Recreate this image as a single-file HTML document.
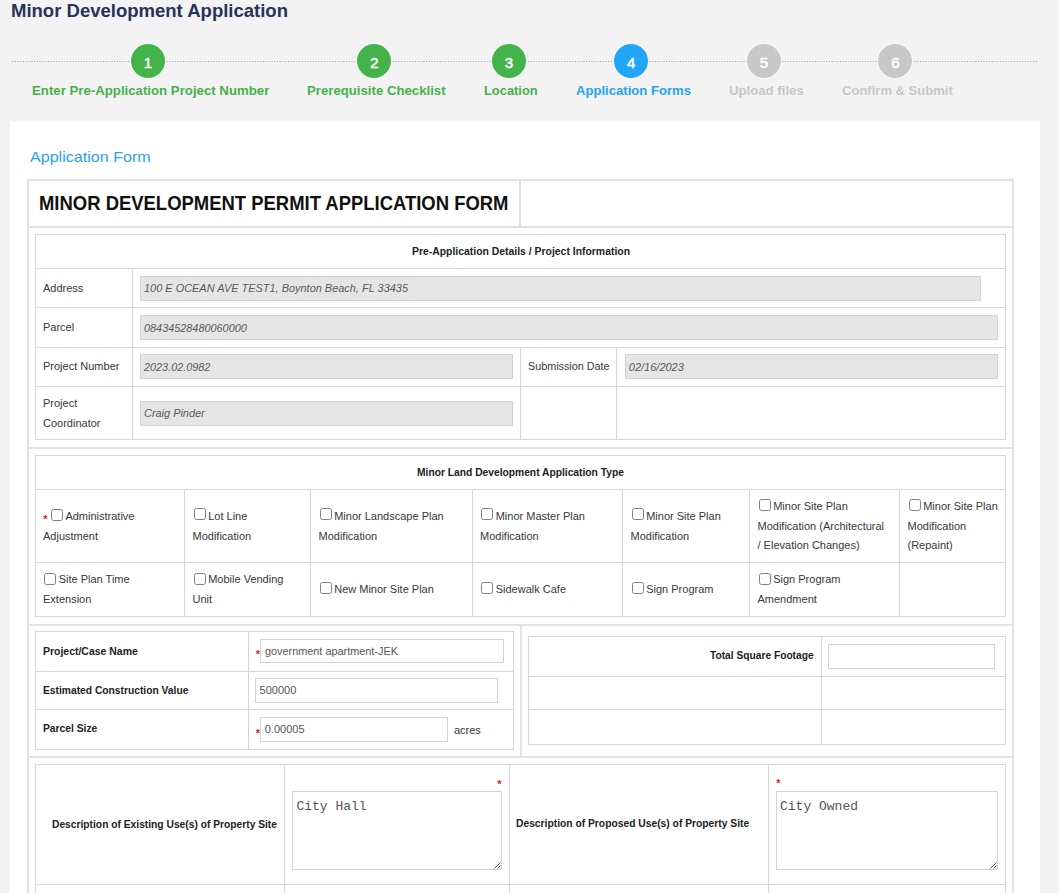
<!DOCTYPE html><html><head><meta charset="utf-8"><style>
html,body{margin:0;padding:0;width:1059px;height:893px;overflow:hidden;background:#f3f3f3;position:relative}
.a{position:absolute}
.t{position:absolute;white-space:nowrap;font-family:'Liberation Sans', sans-serif;line-height:1}
.inp{position:absolute;box-sizing:border-box}
.cb{position:absolute;width:12px;height:12px;box-sizing:border-box;border:1.2px solid #808080;border-radius:2.5px;background:#fff}
.st{position:absolute;color:#d7261e;font-family:"Liberation Sans",sans-serif;font-size:11px;font-weight:bold;line-height:1}
.ci{position:absolute;width:34px;height:34px;border-radius:50%;box-shadow:0 0 0 1px rgba(255,255,255,.6);color:#fff;font-family:"Liberation Sans",sans-serif;font-weight:normal;-webkit-text-stroke:0.5px #fff;font-size:15px;text-align:center;line-height:37px}
</style></head><body>
<svg class="a" style="left:0;top:55px" width="1059" height="12"><line x1="12" y1="6.5" x2="1038" y2="6.5" stroke="#86a3c4" stroke-width="1" stroke-dasharray="1 1.76"/></svg>
<div class="a" style="left:10px;top:121px;width:1030px;height:1px;background:#f9f9f9"></div>
<div class="a" style="left:10px;top:122px;width:1030px;height:800px;background:#fff"></div>
<div class="a" style="left:27px;top:179px;width:987px;height:2px;background:#e2e2e2"></div>
<div class="a" style="left:27px;top:179px;width:2px;height:714px;background:#e2e2e2"></div>
<div class="a" style="left:1012px;top:179px;width:2px;height:714px;background:#e2e2e2"></div>
<div class="a" style="left:519px;top:179px;width:2px;height:48px;background:#e2e2e2"></div>
<div class="a" style="left:27px;top:226px;width:987px;height:2px;background:#e2e2e2"></div>
<div class="a" style="left:27px;top:447px;width:987px;height:2px;background:#e2e2e2"></div>
<div class="a" style="left:27px;top:624px;width:987px;height:2px;background:#e2e2e2"></div>
<div class="a" style="left:27px;top:756px;width:987px;height:2px;background:#e2e2e2"></div>
<div class="a" style="left:520px;top:624px;width:2px;height:133px;background:#e2e2e2"></div>
<div class="a" style="left:35px;top:234px;width:971px;height:1px;background:#d6d6d6"></div>
<div class="a" style="left:35px;top:439px;width:971px;height:1px;background:#d6d6d6"></div>
<div class="a" style="left:35px;top:234px;width:1px;height:206px;background:#d6d6d6"></div>
<div class="a" style="left:1005px;top:234px;width:1px;height:206px;background:#d6d6d6"></div>
<div class="a" style="left:35px;top:268px;width:971px;height:1px;background:#d6d6d6"></div>
<div class="a" style="left:35px;top:307px;width:971px;height:1px;background:#d6d6d6"></div>
<div class="a" style="left:35px;top:347px;width:971px;height:1px;background:#d6d6d6"></div>
<div class="a" style="left:35px;top:386px;width:971px;height:1px;background:#d6d6d6"></div>
<div class="a" style="left:132px;top:268px;width:1px;height:171px;background:#d6d6d6"></div>
<div class="a" style="left:520px;top:347px;width:1px;height:92px;background:#d6d6d6"></div>
<div class="a" style="left:616px;top:347px;width:1px;height:92px;background:#d6d6d6"></div>
<div class="a" style="left:35px;top:455px;width:971px;height:1px;background:#d6d6d6"></div>
<div class="a" style="left:35px;top:616px;width:971px;height:1px;background:#d6d6d6"></div>
<div class="a" style="left:35px;top:455px;width:1px;height:162px;background:#d6d6d6"></div>
<div class="a" style="left:1005px;top:455px;width:1px;height:162px;background:#d6d6d6"></div>
<div class="a" style="left:35px;top:489px;width:971px;height:1px;background:#d6d6d6"></div>
<div class="a" style="left:35px;top:562px;width:971px;height:1px;background:#d6d6d6"></div>
<div class="a" style="left:184px;top:489px;width:1px;height:127px;background:#d6d6d6"></div>
<div class="a" style="left:310px;top:489px;width:1px;height:127px;background:#d6d6d6"></div>
<div class="a" style="left:472px;top:489px;width:1px;height:127px;background:#d6d6d6"></div>
<div class="a" style="left:622px;top:489px;width:1px;height:127px;background:#d6d6d6"></div>
<div class="a" style="left:749px;top:489px;width:1px;height:127px;background:#d6d6d6"></div>
<div class="a" style="left:899px;top:489px;width:1px;height:127px;background:#d6d6d6"></div>
<div class="a" style="left:35px;top:631px;width:479px;height:1px;background:#d6d6d6"></div>
<div class="a" style="left:35px;top:749px;width:479px;height:1px;background:#d6d6d6"></div>
<div class="a" style="left:35px;top:631px;width:1px;height:119px;background:#d6d6d6"></div>
<div class="a" style="left:513px;top:631px;width:1px;height:119px;background:#d6d6d6"></div>
<div class="a" style="left:35px;top:671px;width:479px;height:1px;background:#d6d6d6"></div>
<div class="a" style="left:35px;top:709px;width:479px;height:1px;background:#d6d6d6"></div>
<div class="a" style="left:248px;top:631px;width:1px;height:118px;background:#d6d6d6"></div>
<div class="a" style="left:528px;top:636px;width:478px;height:1px;background:#d6d6d6"></div>
<div class="a" style="left:528px;top:744px;width:478px;height:1px;background:#d6d6d6"></div>
<div class="a" style="left:528px;top:636px;width:1px;height:109px;background:#d6d6d6"></div>
<div class="a" style="left:1005px;top:636px;width:1px;height:109px;background:#d6d6d6"></div>
<div class="a" style="left:528px;top:676px;width:478px;height:1px;background:#d6d6d6"></div>
<div class="a" style="left:528px;top:709px;width:478px;height:1px;background:#d6d6d6"></div>
<div class="a" style="left:821px;top:636px;width:1px;height:108px;background:#d6d6d6"></div>
<div class="a" style="left:35px;top:764px;width:971px;height:1px;background:#d6d6d6"></div>
<div class="a" style="left:35px;top:884px;width:971px;height:1px;background:#d6d6d6"></div>
<div class="a" style="left:35px;top:764px;width:1px;height:129px;background:#d6d6d6"></div>
<div class="a" style="left:1005px;top:764px;width:1px;height:129px;background:#d6d6d6"></div>
<div class="a" style="left:284px;top:764px;width:1px;height:129px;background:#d6d6d6"></div>
<div class="a" style="left:509px;top:764px;width:1px;height:129px;background:#d6d6d6"></div>
<div class="a" style="left:768px;top:764px;width:1px;height:129px;background:#d6d6d6"></div>
<div class="inp" style="left:140px;top:276px;width:841.0px;height:25.0px;background:#e5e5e5;border:1px solid #d2d2d2"></div>
<div class="inp" style="left:140px;top:315px;width:858.0px;height:25.0px;background:#e5e5e5;border:1px solid #d2d2d2"></div>
<div class="inp" style="left:140px;top:354px;width:373.0px;height:25.0px;background:#e5e5e5;border:1px solid #d2d2d2"></div>
<div class="inp" style="left:625px;top:354px;width:373.0px;height:25.0px;background:#e5e5e5;border:1px solid #d2d2d2"></div>
<div class="inp" style="left:140px;top:401px;width:373.0px;height:25.0px;background:#e5e5e5;border:1px solid #d2d2d2"></div>
<div class="inp" style="left:260px;top:639px;width:243.5px;height:24.0px;background:#fff;border:1px solid #d3d3d3"></div>
<div class="inp" style="left:255px;top:678px;width:242.5px;height:24.5px;background:#fff;border:1px solid #d3d3d3"></div>
<div class="inp" style="left:260px;top:717px;width:188.0px;height:25.0px;background:#fff;border:1px solid #d3d3d3"></div>
<div class="inp" style="left:828px;top:644px;width:167.0px;height:25.0px;background:#fff;border:1px solid #d3d3d3"></div>
<div class="inp" style="left:292px;top:791px;width:210.0px;height:79.0px;background:#fff;border:1px solid #d3d3d3"></div>
<div class="inp" style="left:776px;top:791px;width:222.0px;height:79.0px;background:#fff;border:1px solid #d3d3d3"></div>
<div class="ci" style="left:131.0px;top:44.2px;background:#45b34b">1</div>
<div class="ci" style="left:357.4px;top:44.2px;background:#45b34b">2</div>
<div class="ci" style="left:492.0px;top:44.2px;background:#45b34b">3</div>
<div class="ci" style="left:614.1px;top:44.2px;background:#22a6f6">4</div>
<div class="ci" style="left:747.0px;top:44.2px;background:#c8c8c8">5</div>
<div class="ci" style="left:878.4px;top:44.2px;background:#c8c8c8">6</div>
<div class="cb" style="left:50.6px;top:508.6px"></div>
<div class="cb" style="left:193.6px;top:508.4px"></div>
<div class="cb" style="left:319.6px;top:508.4px"></div>
<div class="cb" style="left:481.1px;top:508.4px"></div>
<div class="cb" style="left:631.6px;top:508.4px"></div>
<div class="cb" style="left:758.6px;top:499.0px"></div>
<div class="cb" style="left:908.6px;top:499.0px"></div>
<div class="cb" style="left:44.1px;top:572.6px"></div>
<div class="cb" style="left:193.6px;top:572.6px"></div>
<div class="cb" style="left:319.6px;top:582.3px"></div>
<div class="cb" style="left:481.1px;top:582.3px"></div>
<div class="cb" style="left:631.6px;top:582.3px"></div>
<div class="cb" style="left:758.6px;top:572.6px"></div>
<div class="a" style="left:43.2px;top:517.4px;width:4px;height:4px;color:#e0191b;font:bold 11px/5px 'Liberation Sans', sans-serif;overflow:visible">*</div>
<div class="a" style="left:255.7px;top:652.3px;width:4px;height:4px;color:#e0191b;font:bold 11px/5px 'Liberation Sans', sans-serif;overflow:visible">*</div>
<div class="a" style="left:255.7px;top:730.8px;width:4px;height:4px;color:#e0191b;font:bold 11px/5px 'Liberation Sans', sans-serif;overflow:visible">*</div>
<div class="a" style="left:497.2px;top:781.5px;width:4px;height:4px;color:#e0191b;font:bold 11px/5px 'Liberation Sans', sans-serif;overflow:visible">*</div>
<div class="a" style="left:776.2px;top:781.0px;width:4px;height:4px;color:#e0191b;font:bold 11px/5px 'Liberation Sans', sans-serif;overflow:visible">*</div>
<div class="t" style="left:11.3px;top:2.2px;font-size:18.4px;font-weight:bold;font-style:normal;color:#253459;font-family:'Liberation Sans', sans-serif;transform:scaleX(1.0065);transform-origin:0 0">Minor Development Application</div>
<div class="t" style="left:31.7px;top:84.9px;font-size:12.6px;font-weight:bold;font-style:normal;color:#45b04b;font-family:'Liberation Sans', sans-serif;transform:scaleX(1.0499);transform-origin:0 0">Enter Pre-Application Project Number</div>
<div class="t" style="left:307.2px;top:84.9px;font-size:12.6px;font-weight:bold;font-style:normal;color:#45b04b;font-family:'Liberation Sans', sans-serif;transform:scaleX(1.0476);transform-origin:0 0">Prerequisite Checklist</div>
<div class="t" style="left:483.6px;top:84.9px;font-size:12.6px;font-weight:bold;font-style:normal;color:#45b04b;font-family:'Liberation Sans', sans-serif;transform:scaleX(1.0232);transform-origin:0 0">Location</div>
<div class="t" style="left:575.9px;top:84.9px;font-size:12.6px;font-weight:bold;font-style:normal;color:#23a3f3;font-family:'Liberation Sans', sans-serif;transform:scaleX(1.0401);transform-origin:0 0">Application Forms</div>
<div class="t" style="left:728.8px;top:84.9px;font-size:12.6px;font-weight:bold;font-style:normal;color:#c6c6c6;font-family:'Liberation Sans', sans-serif;transform:scaleX(1.0466);transform-origin:0 0">Upload files</div>
<div class="t" style="left:842.0px;top:84.9px;font-size:12.6px;font-weight:bold;font-style:normal;color:#c6c6c6;font-family:'Liberation Sans', sans-serif;transform:scaleX(1.0351);transform-origin:0 0">Confirm &amp; Submit</div>
<div class="t" style="left:29.6px;top:150.1px;font-size:14.5px;font-weight:normal;font-style:normal;color:#2ea2f0;font-family:'Liberation Sans', sans-serif;transform:scaleX(1.1094);transform-origin:0 0">Application Form</div>
<div class="t" style="left:39.4px;top:194.0px;font-size:19.6px;font-weight:bold;font-style:normal;color:#111;font-family:'Liberation Sans', sans-serif;transform:scaleX(0.9417);transform-origin:0 0">MINOR DEVELOPMENT PERMIT APPLICATION FORM</div>
<div class="t" style="left:411.5px;top:245.9px;font-size:11px;font-weight:bold;font-style:normal;color:#222;font-family:'Liberation Sans', sans-serif;transform:scaleX(0.9460);transform-origin:0 0">Pre-Application Details / Project Information</div>
<div class="t" style="left:43.0px;top:282.5px;font-size:11px;font-weight:normal;font-style:normal;color:#383838;font-family:'Liberation Sans', sans-serif">Address</div>
<div class="t" style="left:43.0px;top:321.9px;font-size:11px;font-weight:normal;font-style:normal;color:#383838;font-family:'Liberation Sans', sans-serif">Parcel</div>
<div class="t" style="left:43.0px;top:361.1px;font-size:11px;font-weight:normal;font-style:normal;color:#383838;font-family:'Liberation Sans', sans-serif">Project Number</div>
<div class="t" style="left:43.0px;top:398.3px;font-size:11px;font-weight:normal;font-style:normal;color:#383838;font-family:'Liberation Sans', sans-serif">Project</div>
<div class="t" style="left:43.0px;top:417.5px;font-size:11px;font-weight:normal;font-style:normal;color:#383838;font-family:'Liberation Sans', sans-serif">Coordinator</div>
<div class="t" style="left:527.8px;top:361.1px;font-size:11px;font-weight:normal;font-style:normal;color:#383838;font-family:'Liberation Sans', sans-serif;transform:scaleX(0.9801);transform-origin:0 0">Submission Date</div>
<div class="t" style="left:144.2px;top:283.4px;font-size:11px;font-weight:normal;font-style:italic;color:#5a5a5a;font-family:'Liberation Sans', sans-serif;transform:scaleX(0.9948);transform-origin:0 0">100 E OCEAN AVE TEST1, Boynton Beach, FL 33435</div>
<div class="t" style="left:144.2px;top:322.5px;font-size:11px;font-weight:normal;font-style:italic;color:#5a5a5a;font-family:'Liberation Sans', sans-serif;transform:scaleX(0.9883);transform-origin:0 0">08434528480060000</div>
<div class="t" style="left:144.3px;top:361.7px;font-size:11px;font-weight:normal;font-style:italic;color:#5a5a5a;font-family:'Liberation Sans', sans-serif;transform:scaleX(0.9867);transform-origin:0 0">2023.02.0982</div>
<div class="t" style="left:628.8px;top:361.7px;font-size:11px;font-weight:normal;font-style:italic;color:#5a5a5a;font-family:'Liberation Sans', sans-serif">02/16/2023</div>
<div class="t" style="left:144.3px;top:407.5px;font-size:11px;font-weight:normal;font-style:italic;color:#5a5a5a;font-family:'Liberation Sans', sans-serif;transform:scaleX(0.9928);transform-origin:0 0">Craig Pinder</div>
<div class="t" style="left:417.1px;top:466.5px;font-size:11px;font-weight:bold;font-style:normal;color:#222;font-family:'Liberation Sans', sans-serif;transform:scaleX(0.9326);transform-origin:0 0">Minor Land Development Application Type</div>
<div class="t" style="left:65.4px;top:511.2px;font-size:11px;font-weight:normal;font-style:normal;color:#383838;font-family:'Liberation Sans', sans-serif">Administrative</div>
<div class="t" style="left:43.0px;top:530.9px;font-size:11px;font-weight:normal;font-style:normal;color:#383838;font-family:'Liberation Sans', sans-serif">Adjustment</div>
<div class="t" style="left:208.2px;top:511.2px;font-size:11px;font-weight:normal;font-style:normal;color:#383838;font-family:'Liberation Sans', sans-serif">Lot Line</div>
<div class="t" style="left:192.5px;top:530.9px;font-size:11px;font-weight:normal;font-style:normal;color:#383838;font-family:'Liberation Sans', sans-serif">Modification</div>
<div class="t" style="left:334.2px;top:511.2px;font-size:11px;font-weight:normal;font-style:normal;color:#383838;font-family:'Liberation Sans', sans-serif">Minor Landscape Plan</div>
<div class="t" style="left:318.5px;top:530.9px;font-size:11px;font-weight:normal;font-style:normal;color:#383838;font-family:'Liberation Sans', sans-serif">Modification</div>
<div class="t" style="left:495.7px;top:511.2px;font-size:11px;font-weight:normal;font-style:normal;color:#383838;font-family:'Liberation Sans', sans-serif">Minor Master Plan</div>
<div class="t" style="left:480.0px;top:530.9px;font-size:11px;font-weight:normal;font-style:normal;color:#383838;font-family:'Liberation Sans', sans-serif">Modification</div>
<div class="t" style="left:646.2px;top:511.2px;font-size:11px;font-weight:normal;font-style:normal;color:#383838;font-family:'Liberation Sans', sans-serif">Minor Site Plan</div>
<div class="t" style="left:630.5px;top:530.9px;font-size:11px;font-weight:normal;font-style:normal;color:#383838;font-family:'Liberation Sans', sans-serif">Modification</div>
<div class="t" style="left:773.2px;top:501.0px;font-size:11px;font-weight:normal;font-style:normal;color:#383838;font-family:'Liberation Sans', sans-serif">Minor Site Plan</div>
<div class="t" style="left:757.5px;top:520.5px;font-size:11px;font-weight:normal;font-style:normal;color:#383838;font-family:'Liberation Sans', sans-serif">Modification (Architectural</div>
<div class="t" style="left:757.5px;top:540.0px;font-size:11px;font-weight:normal;font-style:normal;color:#383838;font-family:'Liberation Sans', sans-serif">/ Elevation Changes)</div>
<div class="t" style="left:923.2px;top:501.0px;font-size:11px;font-weight:normal;font-style:normal;color:#383838;font-family:'Liberation Sans', sans-serif">Minor Site Plan</div>
<div class="t" style="left:907.5px;top:520.5px;font-size:11px;font-weight:normal;font-style:normal;color:#383838;font-family:'Liberation Sans', sans-serif">Modification</div>
<div class="t" style="left:907.5px;top:540.0px;font-size:11px;font-weight:normal;font-style:normal;color:#383838;font-family:'Liberation Sans', sans-serif">(Repaint)</div>
<div class="t" style="left:58.7px;top:574.0px;font-size:11px;font-weight:normal;font-style:normal;color:#383838;font-family:'Liberation Sans', sans-serif">Site Plan Time</div>
<div class="t" style="left:43.0px;top:594.2px;font-size:11px;font-weight:normal;font-style:normal;color:#383838;font-family:'Liberation Sans', sans-serif">Extension</div>
<div class="t" style="left:208.2px;top:574.0px;font-size:11px;font-weight:normal;font-style:normal;color:#383838;font-family:'Liberation Sans', sans-serif">Mobile Vending</div>
<div class="t" style="left:192.5px;top:594.2px;font-size:11px;font-weight:normal;font-style:normal;color:#383838;font-family:'Liberation Sans', sans-serif">Unit</div>
<div class="t" style="left:334.2px;top:583.7px;font-size:11px;font-weight:normal;font-style:normal;color:#383838;font-family:'Liberation Sans', sans-serif">New Minor Site Plan</div>
<div class="t" style="left:495.7px;top:583.7px;font-size:11px;font-weight:normal;font-style:normal;color:#383838;font-family:'Liberation Sans', sans-serif">Sidewalk Cafe</div>
<div class="t" style="left:646.2px;top:583.7px;font-size:11px;font-weight:normal;font-style:normal;color:#383838;font-family:'Liberation Sans', sans-serif">Sign Program</div>
<div class="t" style="left:773.2px;top:574.0px;font-size:11px;font-weight:normal;font-style:normal;color:#383838;font-family:'Liberation Sans', sans-serif">Sign Program</div>
<div class="t" style="left:757.5px;top:594.2px;font-size:11px;font-weight:normal;font-style:normal;color:#383838;font-family:'Liberation Sans', sans-serif">Amendment</div>
<div class="t" style="left:43.3px;top:645.5px;font-size:11px;font-weight:bold;font-style:normal;color:#222;font-family:'Liberation Sans', sans-serif;transform:scaleX(0.9511);transform-origin:0 0">Project/Case Name</div>
<div class="t" style="left:43.3px;top:684.5px;font-size:11px;font-weight:bold;font-style:normal;color:#222;font-family:'Liberation Sans', sans-serif;transform:scaleX(0.9328);transform-origin:0 0">Estimated Construction Value</div>
<div class="t" style="left:43.3px;top:723.2px;font-size:11px;font-weight:bold;font-style:normal;color:#222;font-family:'Liberation Sans', sans-serif;transform:scaleX(0.9347);transform-origin:0 0">Parcel Size</div>
<div class="t" style="left:264.8px;top:646.0px;font-size:11px;font-weight:normal;font-style:normal;color:#555;font-family:'Liberation Sans', sans-serif;transform:scaleX(0.9880);transform-origin:0 0">government apartment-JEK</div>
<div class="t" style="left:259.6px;top:685.3px;font-size:11px;font-weight:normal;font-style:normal;color:#555;font-family:'Liberation Sans', sans-serif">500000</div>
<div class="t" style="left:264.8px;top:724.0px;font-size:11px;font-weight:normal;font-style:normal;color:#555;font-family:'Liberation Sans', sans-serif">0.00005</div>
<div class="t" style="left:453.9px;top:724.5px;font-size:11px;font-weight:normal;font-style:normal;color:#333;font-family:'Liberation Sans', sans-serif">acres</div>
<div class="t" style="left:709.6px;top:650.4px;font-size:11px;font-weight:bold;font-style:normal;color:#222;font-family:'Liberation Sans', sans-serif;transform:scaleX(0.9280);transform-origin:0 0">Total Square Footage</div>
<div class="t" style="left:52.3px;top:818.7px;font-size:11px;font-weight:bold;font-style:normal;color:#222;font-family:'Liberation Sans', sans-serif;transform:scaleX(0.9319);transform-origin:0 0">Description of Existing Use(s) of Property Site</div>
<div class="t" style="left:516.4px;top:818.2px;font-size:11px;font-weight:bold;font-style:normal;color:#222;font-family:'Liberation Sans', sans-serif;transform:scaleX(0.9351);transform-origin:0 0">Description of Proposed Use(s) of Property Site</div>
<div class="t" style="left:296.4px;top:799.8px;font-size:13px;font-weight:normal;font-style:normal;color:#555;font-family:'Liberation Mono', monospace">City Hall</div>
<div class="t" style="left:780.0px;top:799.8px;font-size:13px;font-weight:normal;font-style:normal;color:#555;font-family:'Liberation Mono', monospace">City Owned</div>
<svg class="a" style="left:492.0px;top:860.0px" width="10" height="10"><path d="M2.5 8.5 L8.5 2.5 M5.5 8.5 L8.5 5.5" stroke="#555" stroke-width="1"/></svg>
<svg class="a" style="left:988.0px;top:860.2px" width="10" height="10"><path d="M2.5 8.5 L8.5 2.5 M5.5 8.5 L8.5 5.5" stroke="#555" stroke-width="1"/></svg>
</body></html>
